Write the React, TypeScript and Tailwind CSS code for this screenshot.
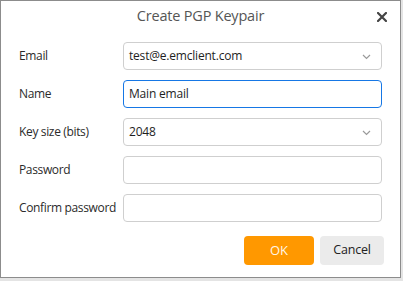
import React from "react";

function Chevron() {
  return (
    <svg width="9" height="6" viewBox="0 0 9 6" className="absolute right-[10px] top-[11px]">
      <path d="M1 1 L4.5 4.5 L8 1" fill="none" stroke="#9a9a9a" strokeWidth="1.2" />
    </svg>
  );
}

function Field({ label, value, select, focused }: { label: string; value?: string; select?: boolean; focused?: boolean }) {
  return (
    <div className="flex h-[28px] items-center">
      <div className="w-[104px] text-[12px] tracking-[-0.35px] text-[#2b2b2b]">{label}</div>
      <div
        className={
          "relative flex h-[28px] w-[259px] items-center rounded-[4px] border bg-white pl-[5px] text-[12px] tracking-[-0.2px] text-[#1e1e1e] " +
          (focused ? "border-[#1677e5]" : "border-[#cfcfcf]")
        }
      >
        <span>{value}</span>
        {select && <Chevron />}
      </div>
    </div>
  );
}

export default function App() {
  return (
    <div className="h-[281px] w-[403px] bg-[#e4e4e4]" style={{ fontFamily: '"Open Sans", "Noto Sans", sans-serif' }}>
      <div className="h-[278px] w-[401px] border border-[#8c8c8c] bg-white">
        <div className="relative flex h-[29px] items-center justify-center">
          <span className="text-[14.5px] tracking-[-0.2px] text-[#555555]">Create PGP Keypair</span>
          <svg width="10" height="10" viewBox="0 0 10 10" className="absolute right-[13px] top-[11px]">
            <path d="M1 1 L9 9 M9 1 L1 9" stroke="#444" strokeWidth="2.2" strokeLinecap="square" />
          </svg>
        </div>
        <div className="flex flex-col gap-[10px] pl-[18px] pt-[12px]">
          <Field label="Email" value="test@e.emclient.com" select />
          <Field label="Name" value="Main email" focused />
          <Field label="Key size (bits)" value="2048" select />
          <Field label="Password" />
          <Field label="Confirm password" />
        </div>
        <div className="mt-[14px] flex justify-end gap-[6px] pr-[16px]">
          <button className="h-[29px] w-[70px] rounded-[4px] bg-[#ff9800] text-[13px] text-[#fff6e8]">OK</button>
          <button className="h-[29px] w-[64px] rounded-[4px] bg-[#ebebeb] text-[12.5px] tracking-[-0.2px] text-[#222]">Cancel</button>
        </div>
      </div>
    </div>
  );
}
